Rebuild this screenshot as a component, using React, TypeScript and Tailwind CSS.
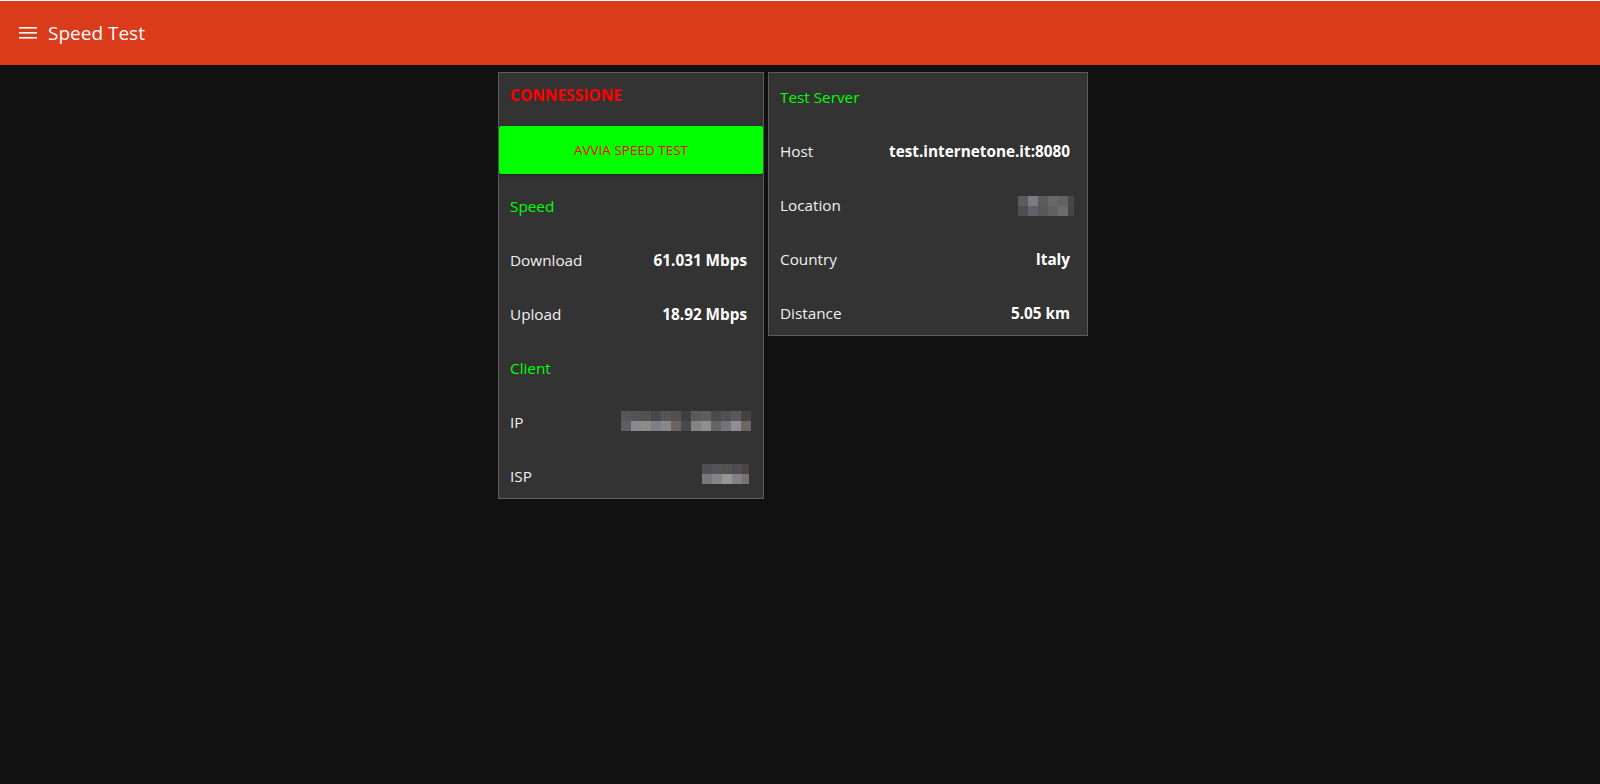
import React from 'react'

type Pix = { widths: number[]; rows: string[][] }

const ipBlur: Pix = {
  widths: [10, 10, 10, 10, 10, 10, 10, 10, 10, 10, 10, 10, 10],
  rows: [
    ['#555758', '#535353', '#515151', '#48484c', '#555555', '#564f4f', '#3f3f42', '#5a5a5c', '#5d5d5f', '#4a4a4a', '#505052', '#58595d', '#47423f'],
    ['#5e5e60', '#8a8a8c', '#8e8c88', '#7b7f83', '#86888a', '#6d6360', '#484850', '#838383', '#8e8e8e', '#646460', '#737378', '#909094', '#6c6664'],
  ],
}

const ispBlur: Pix = {
  widths: [10, 10, 10, 10, 7],
  rows: [
    ['#4e5052', '#545456', '#525250', '#4c4d52', '#4a4543'],
    ['#78787a', '#858585', '#969696', '#828284', '#77706e'],
  ],
}

const locationBlur: Pix = {
  widths: [10, 10, 10, 10, 10, 6],
  rows: [
    ['#5a5b5d', '#7a7d7f', '#5c5c5c', '#69696b', '#626264', '#4a4644'],
    ['#4c4e52', '#626264', '#58585a', '#606060', '#6c6c6e', '#47453f'],
  ],
}

// pixelated (censored) value
function Pixelated({ data, className }: { data: Pix; className?: string }) {
  return (
    <div className={'flex flex-col ' + (className ?? '')}>
      {data.rows.map((row, r) => (
        <div key={r} className="flex h-[10px]">
          {row.map((c, i) => (
            <div key={i} style={{ width: data.widths[i], backgroundColor: c }} className="h-full" />
          ))}
        </div>
      ))}
    </div>
  )
}

function Row({ label, children }: { label: string; children?: React.ReactNode }) {
  return (
    <div className="flex h-[44px] items-center justify-between">
      <span className="text-[15.3px] text-[#f0f0f0]">{label}</span>
      {children}
    </div>
  )
}

function Value({ children }: { children: React.ReactNode }) {
  return <span className="text-[15.3px] font-bold text-white">{children}</span>
}

function SectionTitle({ children }: { children: React.ReactNode }) {
  return (
    <div className="flex h-[44px] items-center">
      <span className="text-[15.3px] text-[#00ff00]">{children}</span>
    </div>
  )
}

export default function App() {
  return (
    <div className="min-h-screen bg-[#111111] font-['Open_Sans',_'Noto_Sans',_sans-serif]">
      <header className="mt-px flex h-[64px] items-center gap-[11px] bg-[#da3b1b] pl-[19px]">
        <svg width="18" height="14" viewBox="0 0 18 14" className="mt-[1px]">
          <rect x="0" y="0" width="18" height="1.6" fill="white" />
          <rect x="0" y="5" width="18" height="1.6" fill="white" />
          <rect x="0" y="10" width="18" height="1.6" fill="white" />
        </svg>
        <h1 className="mt-[1px] text-[19px] text-white">Speed Test</h1>
      </header>

      <main className="flex items-start justify-center gap-[4px] pt-[7px] pr-[14px]">
        {/* connection card */}
        <div className="w-[266px] border border-[#5c5c5c] bg-[#333333]">
          <div className="mt-[1px] flex h-[44px] items-center pl-[11px]">
            <span className="text-[15.5px] font-bold text-[#ff0000]">CONNESSIONE</span>
          </div>
          <button className="mt-[8px] flex h-[48px] w-full items-center justify-center rounded-[2px] bg-[#00ff00] text-[13.5px] uppercase text-[#ff0000] shadow-[0_1px_3px_rgba(0,0,0,0.4)]">
            Avvia Speed Test
          </button>
          <div className="mt-[10px] flex flex-col gap-[10px] pl-[11px] pr-[16px]">
            <SectionTitle>Speed</SectionTitle>
            <Row label="Download">
              <Value>61.031 Mbps</Value>
            </Row>
            <Row label="Upload">
              <Value>18.92 Mbps</Value>
            </Row>
            <SectionTitle>Client</SectionTitle>
            <Row label="IP">
              <Pixelated data={ipBlur} className="-mr-[4px] -mt-[3px]" />
            </Row>
            <Row label="ISP">
              <Pixelated data={ispBlur} className="-mr-[2px] -mt-[5px]" />
            </Row>
          </div>
        </div>

        {/* server card */}
        <div className="w-[320px] border border-[#5c5c5c] bg-[#333333]">
          <div className="flex flex-col gap-[10px] pt-[2px] pl-[11px] pr-[17px]">
            <SectionTitle>Test Server</SectionTitle>
            <Row label="Host">
              <Value>test.internetone.it:8080</Value>
            </Row>
            <Row label="Location">
              <Pixelated data={locationBlur} className="-mr-[4px] mt-[2px]" />
            </Row>
            <Row label="Country">
              <Value>Italy</Value>
            </Row>
            <Row label="Distance">
              <Value>5.05 km</Value>
            </Row>
          </div>
        </div>
      </main>
    </div>
  )
}
